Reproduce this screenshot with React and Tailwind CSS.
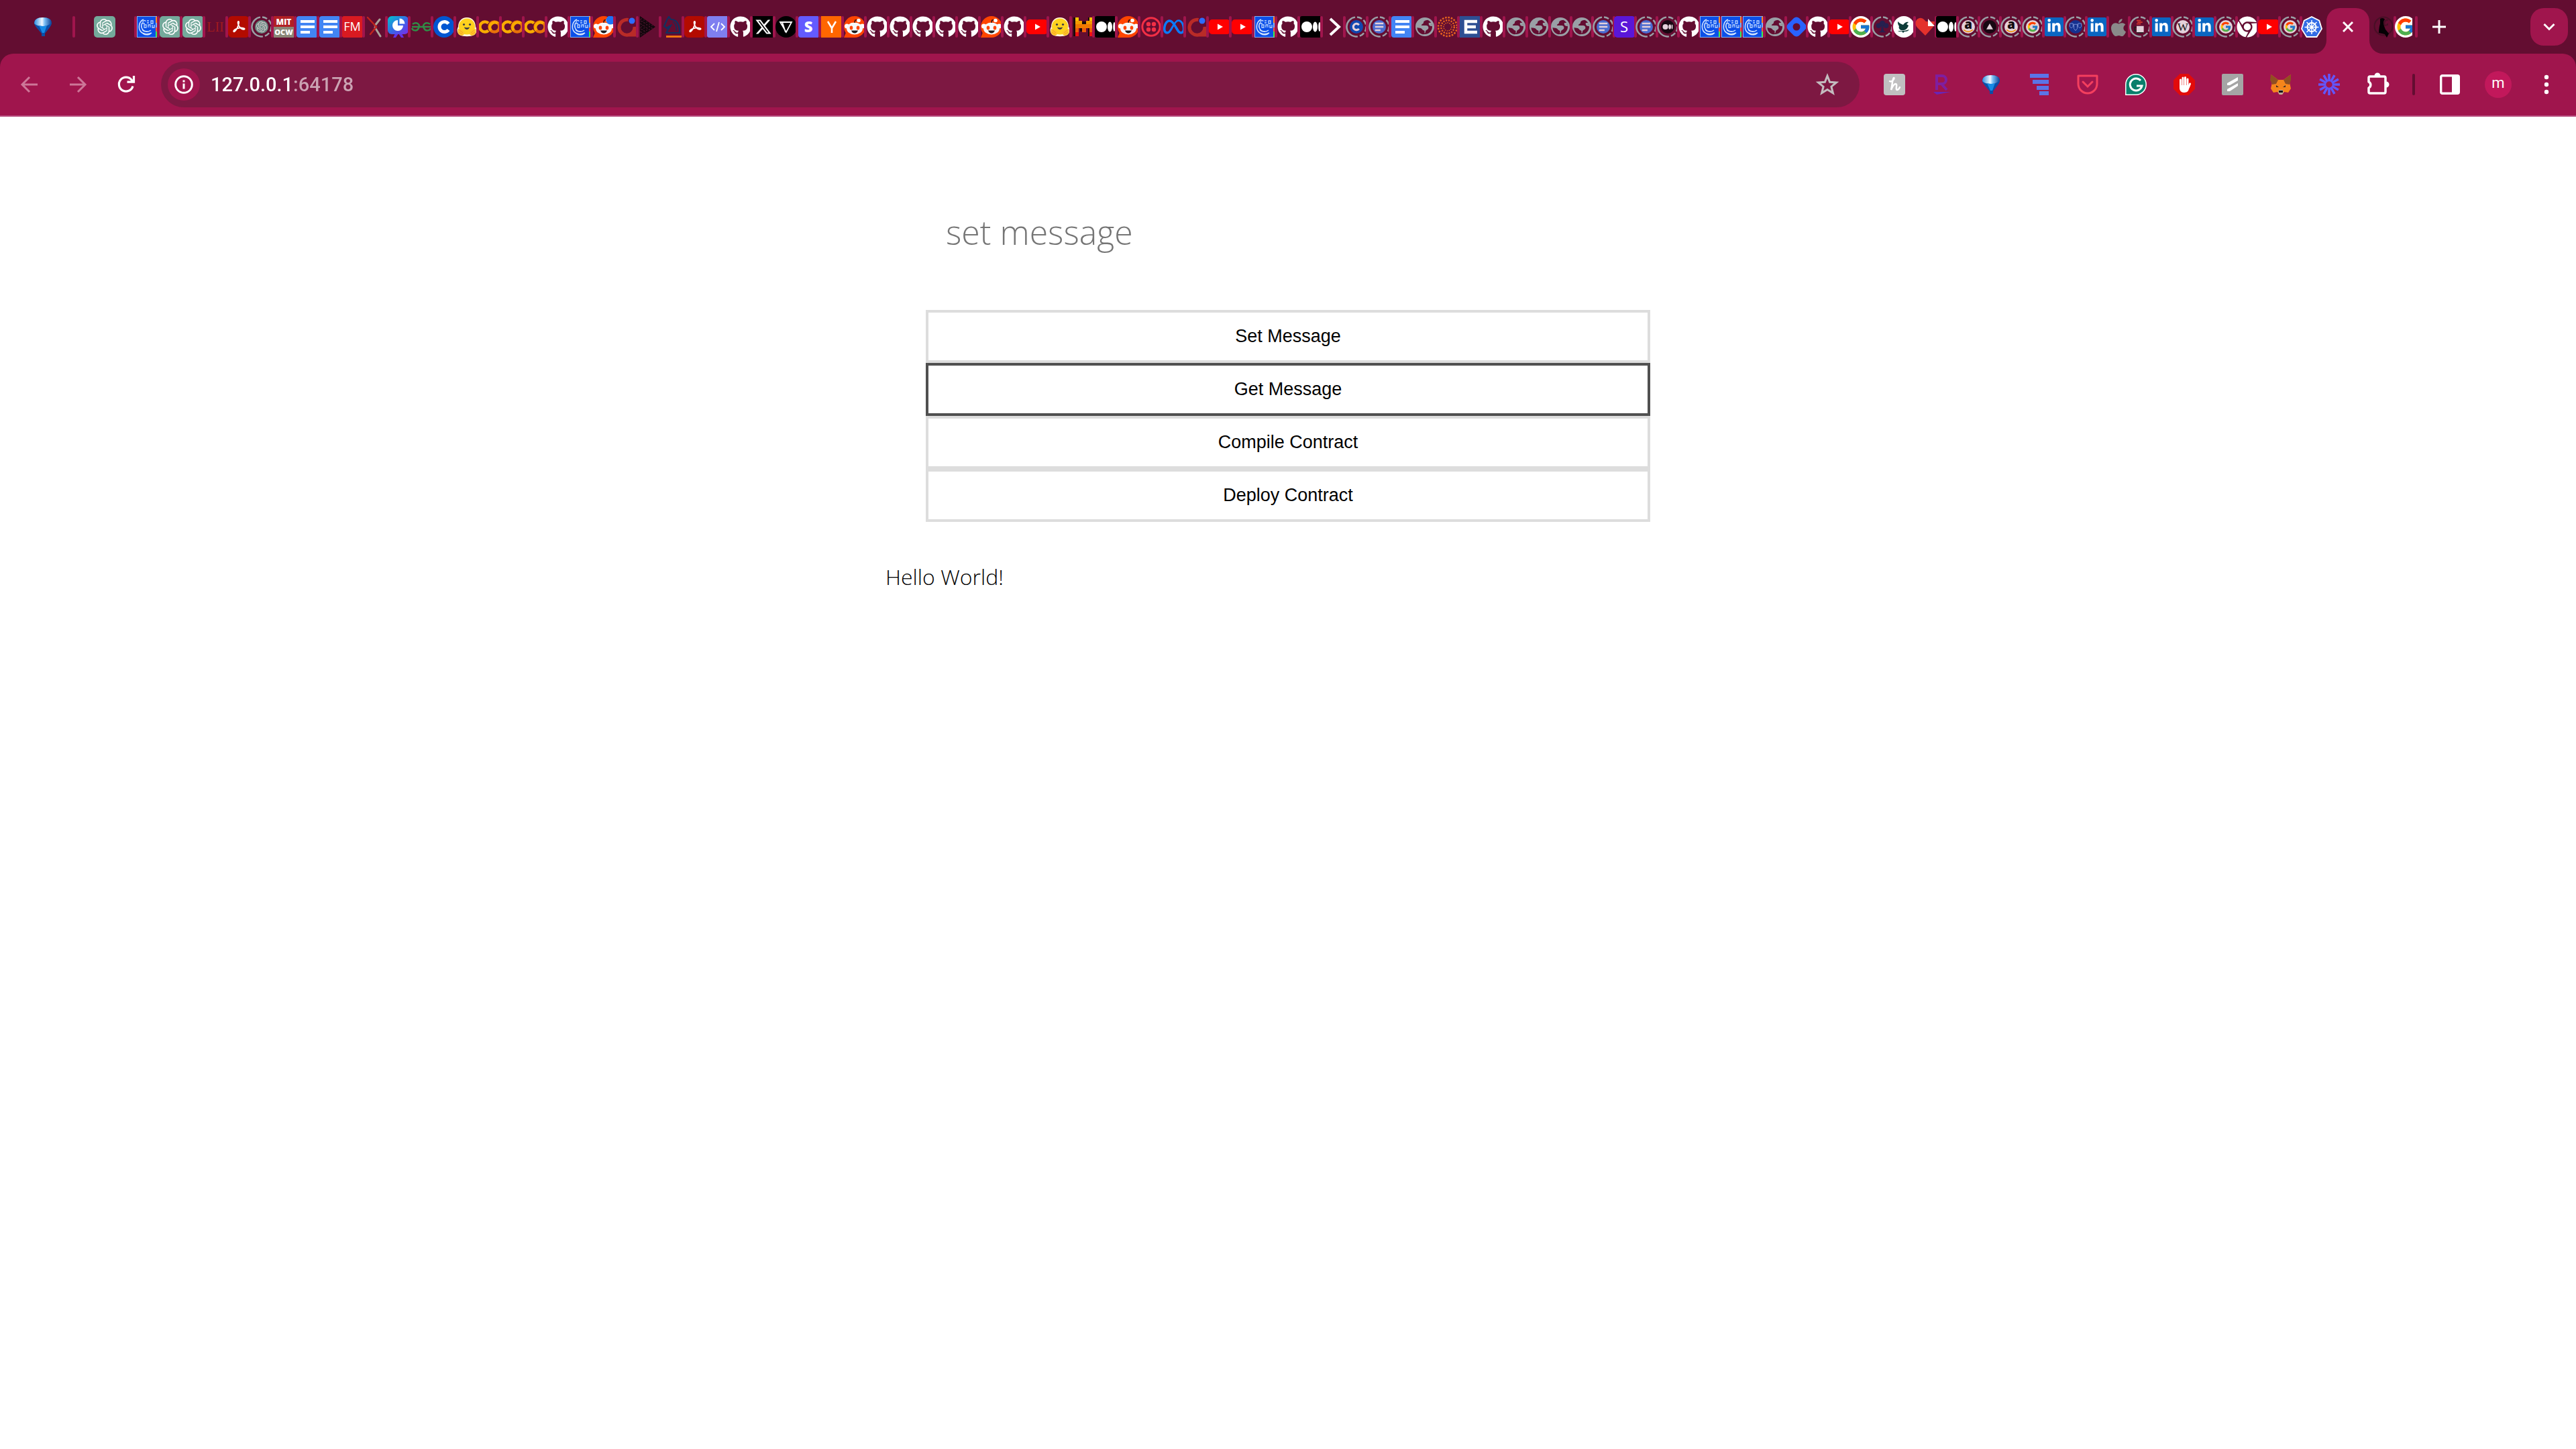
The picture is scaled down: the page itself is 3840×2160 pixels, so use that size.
import React from "react";
import { FaGithub, FaApple, FaChrome, FaHandPaper, FaLinkedinIn } from "react-icons/fa";
import { FaMeta, FaXTwitter } from "react-icons/fa6";
import { FcGoogle } from "react-icons/fc";
import { SiOpenai } from "react-icons/si";

const Glyph = ({ children }) => (
  <svg viewBox="0 0 32 32" className="block size-8 shrink-0 overflow-visible" aria-hidden="true">
    {children}
  </svg>
);

const Letter = ({ children, x = 15, y = 24, size = 22, fill = "#fff", weight = 400, family = "Open Sans, sans-serif" }) => (
  <text x={x} y={y} fontSize={size} fill={fill} fontWeight={weight} fontFamily={family} textAnchor="middle">
    {children}
  </text>
);

/* Favicons, each drawn on a 32 unit square */
const College = () => (
  <g>
    <rect width="32" height="32" fill="#0b4fe8" />
    <path d="M0 .5H32M.5 0V32M0 31.5H30" stroke="#7fb2f5" fill="none" />
    <path d="M29 1v9" stroke="#ff8a2b" strokeWidth="2" />
    <path d="M29 10v7" stroke="#7fb2f5" strokeWidth="2" />
    <path d="M29 17v6" stroke="#ff5a3c" strokeWidth="2" />
    <path d="M29 23v8" stroke="#3df04d" strokeWidth="2" />
    <path d="M10 5C3 8 2 17 5 22s11 6 17 3M8 10c-3 6 0 13 8 13M9 26c5 3 10 2 13-1M8 20c3 4 9 4 13 1" stroke="#d5e6ff" strokeWidth="1.500" fill="none" />
    <path d="M9 8c1-2 4-2 4 0M9 8v3h3M15 7h3m-3 3h3M21 7v4h3V7zM11 13v4h3v-4zM17 17v-4h3v4M23 13v4h3v-4" stroke="#b9d4ff" strokeWidth="1.300" fill="none" />
  </g>
);
const Gpt = () => (
  <g>
    <rect width="32" height="32" rx="5" fill="#74a99b" />
    <SiOpenai x="4" y="4" size={24} color="#fff" />
  </g>
);
const Lii = () => <Letter size={20} fill="#a01a1e" family="Liberation Serif, serif" y={23}>LII</Letter>;
const Acrobat = () => (
  <g>
    <rect width="32" height="32" rx="6" fill="#b30b00" />
    <path d="M15.500 8c-1.500 0-1 3.500.5 6.500 2 4 6 6.500 8.500 5 1-1.500-3.500-2.500-7.500-1.800-4 .7-9 2.800-8.800 5 .6 1.800 3.500-.8 5.500-5.200 1.700-3.800 3.500-9.500 1.800-9.500z" fill="none" stroke="#fff" strokeWidth="1.800" />
  </g>
);
const Mit = () => (
  <g>
    <rect width="32" height="16" fill="#b11f24" />
    <rect y="16" width="32" height="16" fill="#8b8778" />
    <Letter size={12} weight={800} y={13}>MIT</Letter>
    <Letter size={11} weight={800} y={28}>OCW</Letter>
  </g>
);
const Docs = () => (
  <g>
    <rect width="32" height="32" rx="4" fill="#4285f4" />
    <path d="M6 8h21M6 16h21M6 24h14" stroke="#fff" strokeWidth="4" />
  </g>
);
const Fm = () => (
  <g>
    <rect width="32" height="32" rx="3" fill="#d91a21" />
    <Letter size={18} weight={400} y={22}>FM</Letter>
  </g>
);
const Arxiv = () => (
  <g strokeLinecap="round" fill="none">
    <path d="M22 5 15 14M15 17l8 13" stroke="#aaa499" strokeWidth="3" />
    <path d="M4 2l13 14L8 27" stroke="#c0241e" strokeWidth="2.500" />
  </g>
);
const Slides = () => (
  <g>
    <defs>
      <linearGradient id="slides" x1="0" y1="0" x2="1" y2="1">
        <stop offset="0" stopColor="#00c4cc" />
        <stop offset=".55" stopColor="#3a63e8" />
        <stop offset="1" stopColor="#7d2ae8" />
      </linearGradient>
    </defs>
    <path d="M12 24l-4 8h4l4-6 4 6h4l-4-8z" fill="#6431e8" />
    <rect width="31" height="27" rx="6" fill="url(#slides)" />
    <path d="M15 6v8h8a8 8 0 1 1-8-8z" fill="#fff" />
    <path d="M17.500 3.500v8h8a8 8 0 0 0-8-8z" fill="#fff" />
  </g>
);
const Geeks = () => (
  <path d="M2 16h28M3 12c6-4 12 0 9 6-2 5-9 4-10 0M29 12c-6-4-12 0-9 6 2 5 9 4 10 0" fill="none" stroke="#2f8d46" strokeWidth="2.500" />
);
const Coursera = () => (
  <g>
    <circle cx="16" cy="16" r="16" fill="#0056d2" />
    <path d="M22.500 11.500a7.500 7.500 0 1 0 0 9" fill="none" stroke="#fff" strokeWidth="5" />
  </g>
);
const Hugging = () => (
  <g>
    <path d="M16 2C8 2 3 8 3 16c-3 5-1 10 2 12 5 3 17 3 22 0 3-2 5-7 2-12C29 8 24 2 16 2z" fill="#fff6df" />
    <circle cx="16" cy="15.500" r="12" fill="#ffd21e" />
    <circle cx="11.500" cy="12.500" r="1.600" fill="#3a3b45" />
    <circle cx="20.500" cy="12.500" r="1.600" fill="#3a3b45" />
    <path d="M12 16.500c1 4.500 7 4.500 8 0q-4 1.500-8 0z" fill="#3a3b45" />
    <path d="M3 19c3 0 6 2 9 4 1 3-1 6-3 6-5 0-8-4-6-10zM29 19c-3 0-6 2-9 4-1 3 1 6 3 6 5 0 8-4 6-10z" fill="#ffc52a" />
    <path d="M5 21l5 4M4 24l5 3M27 21l-5 4M28 24l-5 3" stroke="#f5a21c" strokeWidth="1" />
  </g>
);
const Colab = () => (
  <g fill="none" strokeWidth="4.500">
    <path d="M14 10.500a7.500 7.500 0 1 0 0 11" stroke="#f9ab00" />
    <circle cx="23" cy="16" r="7.500" stroke="#e8710a" />
    <path d="M17.700 21.300A7.500 7.500 0 0 1 28 10.700" stroke="#f9ab00" />
  </g>
);
const Github = () => <FaGithub size={32} color="#fff" />;
const Reddit = () => (
  <g>
    <circle cx="16" cy="16" r="16" fill="#ff4500" />
    <path d="M0 32h16V20H5z" fill="#ff4500" />
    <circle cx="4.500" cy="15" r="3.500" fill="#fff" />
    <circle cx="27.500" cy="15" r="3.500" fill="#fff" />
    <ellipse cx="16" cy="18.500" rx="12" ry="9" fill="#f5f8fa" />
    <path d="M16 10c0-4 1-5 4-4" stroke="#2a1512" strokeWidth="1.500" fill="none" />
    <circle cx="22" cy="6.500" r="2.800" fill="#fff" />
    <ellipse cx="11" cy="17.500" rx="2.300" ry="3" fill="#ff4500" />
    <ellipse cx="21" cy="17.500" rx="2.300" ry="3" fill="#ff4500" />
    <path d="M11 21.500h10q-1.500 4-5 4t-5-4z" fill="#1c1c1c" />
  </g>
);
const RedditNew = () => (
  <g>
    <Reddit />
    <circle cx="26" cy="6" r="6.500" fill="#1a73f8" />
  </g>
);
const RingDot = () => (
  <g>
    <path d="M19 5.500A11.500 11.500 0 1 0 28 16v12h-8" fill="none" stroke="#b92b27" strokeWidth="5" />
    <circle cx="24" cy="7" r="6" fill="#630d31" />
    <circle cx="24" cy="7" r="4.500" fill="#2d6cff" />
  </g>
);
const Cubes = () => (
  <g>
    <path d="M2 0 25 16 2 32z" fill="#12060c" />
    <path d="M4 3v26M8 5v22M12 8v16M16 11v10M20 13v6M2 5l18 13M2 11l14 10M2 17l10 8M2 23l6 5" stroke="#4f1730" strokeDasharray="2 2" />
  </g>
);
const Knight = () => (
  <g>
    <path d="M8 25c0-5 4-7 6-11-3 1-4 2-6 4l-4-3 4-9 3-5 3 4c8 0 13 6 13 20H6" fill="none" stroke="#12305f" strokeWidth="2.200" />
    <path d="M17 8c4 3 6 8 5 14" fill="none" stroke="#12305f" strokeWidth="1.500" />
    <path d="M7 30.500h23" stroke="#f0750f" strokeWidth="3" />
  </g>
);
const Code = () => (
  <g>
    <rect width="32" height="32" rx="3" fill="#7f7ff0" />
    <path d="M11 11l-5 5 5 5M21 11l5 5-5 5M18 9l-4 14" fill="none" stroke="#fff" strokeWidth="1.800" />
  </g>
);
const Twitter = () => (
  <g>
    <rect width="32" height="32" fill="#000" />
    <FaXTwitter x="3" y="3" size={26} color="#fff" />
  </g>
);
const Prism = () => (
  <g>
    <circle cx="16" cy="16" r="16" fill="#000" />
    <path d="M7 9h17l-8 15zM10 9l5 15" fill="none" stroke="#fff" strokeWidth="1.800" />
  </g>
);
const StripeS = () => (
  <g>
    <rect width="32" height="32" rx="4" fill="#635bff" />
    <Letter weight={800} size={22}>S</Letter>
  </g>
);
const Combinator = () => (
  <g>
    <rect width="32" height="32" fill="#ff6600" />
    <path d="M10 8l6 10 6-10M16 17v8" stroke="#fff" strokeWidth="2.500" fill="none" />
  </g>
);
const Youtube = () => (
  <g>
    <rect y="5" width="32" height="22" rx="5" fill="#f00" />
    <path d="M13 11.500v9l8-4.500z" fill="#fff" />
  </g>
);
const Mistral = () => (
  <g>
    <path d="M2 2h7v28H2zM12 8h9v15h-9zM24 2h7v28h-7z" fill="#1a0a0a" />
    <path d="M5 2h5v6H5zM26 2h5v6h-5z" fill="#f7c500" />
    <path d="M5 7h10v6H5zM21 7h10v6H21z" fill="#f59a00" />
    <path d="M5 12h26v6H5z" fill="#f07a00" />
    <path d="M5 18h5v6H5zM15 18h6v6h-6zM26 18h5v6h-5z" fill="#ee5a0a" />
    <path d="M5 24h5v6H5zM26 24h5v6h-5z" fill="#f01010" />
  </g>
);
const Medium = () => (
  <g>
    <rect width="32" height="32" rx="3" fill="#000" />
    <circle cx="10" cy="16" r="8" fill="#fff" />
    <ellipse cx="22.500" cy="16" rx="3.500" ry="7.500" fill="#fff" />
    <ellipse cx="29" cy="16" rx="1.800" ry="7" fill="#fff" />
  </g>
);
const Twilio = () => (
  <g fill="#f22f46">
    <circle cx="16" cy="16" r="13.200" fill="none" stroke="#f22f46" strokeWidth="3" />
    <circle cx="12" cy="12" r="3.200" />
    <circle cx="20" cy="12" r="3.200" />
    <circle cx="12" cy="20" r="3.200" />
    <circle cx="20" cy="20" r="3.200" />
  </g>
);
const Meta = () => <FaMeta size={32} color="#0a7cff" />;
const Prompt = () => <path d="M11 4l13 12-13 12" fill="none" stroke="#fff" strokeWidth="4" />;
const Globe = () => (
  <g>
    <circle cx="16" cy="16" r="12.500" fill="none" stroke="#9aa0a6" strokeWidth="3" />
    <path d="M3 16C3 8 9 3 16 3c3 0 4 1 4 3-3 0-6 1-6 4 0 2-3 1-3 4h7c3 0 4 3 3 5-2 2-4 2-4 4s-1 3-3 3v3C8 29 3 23 3 16z" fill="#9aa0a6" />
    <path d="M4.500 17c2 1 5 0 7 2 1 2 3 2 4 3v5c-6 1-11-4-11-10z" fill="#630d31" />
    <path d="M22 10c-1 3 1 5 5 5l-1-5z" fill="#9aa0a6" />
  </g>
);
const Orbit = () => (
  <g fill="none" stroke="#e8641e">
    <circle cx="16" cy="16" r="14" strokeWidth="2.600" strokeDasharray="2.600 1.800" />
    <circle cx="16" cy="16" r="9.800" strokeWidth="2.400" strokeDasharray="2.200 1.700" />
    <circle cx="16" cy="16" r="6" strokeWidth="1.500" strokeDasharray="1.500 1.500" />
  </g>
);
const BlockE = () => (
  <g>
    <rect width="32" height="32" fill="#2d4f93" />
    <path d="M26 8H9v16h17M9 16h15" stroke="#fff" strokeWidth="4.500" fill="none" />
  </g>
);
const PurpleS = () => (
  <g>
    <rect width="32" height="32" rx="5" fill="#5a17d8" />
    <Letter size={22}>S</Letter>
  </g>
);
const Diamond = () => (
  <g>
    <rect x="4" y="4" width="24" height="24" rx="6" fill="#2962ff" transform="rotate(45 16 16)" />
    <circle cx="16" cy="16" r="5.500" fill="#630d31" />
  </g>
);
const Google = () => (
  <g>
    <circle cx="16" cy="16" r="16" fill="#fff" />
    <FcGoogle x="1" y="1" size={30} />
  </g>
);
const Bird = () => (
  <g>
    <circle cx="16" cy="16" r="16" fill="#fff" />
    <path d="M7 8c2 2 5 4 8 5 2-3 5-5 8-4l-3 3 3 2c-2 6-6 8-11 7-3-1-4-4-3-6-2-2-2-5-2-7zM7 22c5 0 9 1 17-2-2 3-5 3-7 3l-2 2-2-2c-3 0-5 0-6-1z" fill="#0d3b38" />
  </g>
);
const Heart = () => (
  <g>
    <path d="M16 29 4 17C-3 9 6-2 14 5l3 3h13c0 5-2 8-4 10z" fill="#e4312c" />
    <path d="M20 4l10 11H20z" fill="#fff" />
  </g>
);
const Amazon = () => (
  <g>
    <circle cx="16" cy="16" r="16" fill="#e3d0da" />
    <Letter x={16} size={30} y={20} weight={800} fill="#120a0e">a</Letter>
    <path d="M5 23c7 6 15 6 22 0" fill="none" stroke="#f29100" strokeWidth="2.500" />
  </g>
);
const Vercel = () => (
  <g>
    <circle cx="16" cy="16" r="16" fill="#180812" />
    <path d="M16 8l8 14H8z" fill="#e3d0da" />
  </g>
);
const PaleGoogle = () => (
  <g>
    <circle cx="16" cy="16" r="16" fill="#e3d0da" />
    <FcGoogle x="2" y="2" size={28} />
  </g>
);
const Linkedin = () => (
  <g>
    <rect x="2" y="2" width="28" height="28" rx="2" fill="#0a66c2" />
    <FaLinkedinIn x="5" y="4" size={22} color="#fff" />
  </g>
);
const Tree = () => (
  <g fill="#26204f">
    <circle cx="16" cy="8" r="7" />
    <circle cx="7" cy="13" r="6" />
    <circle cx="25" cy="13" r="6" />
    <path d="M14 12h4l1 13 6 4H7l6-4z" />
  </g>
);
const Shields = () => (
  <g>
    <circle cx="16" cy="16" r="16" fill="#15318f" />
    <path d="M2 8h8v7l-4 4-4-4zM12 10h8v10l-4 5-4-5zM22 8h8v7l-4 4-4-4z" fill="none" stroke="#7f93d8" strokeWidth="1.500" />
  </g>
);
const Apple = () => <FaApple x="1" y="2" size={30} color="#8a8a8a" />;
const Mug = () => (
  <g>
    <path d="M8 1h10M10 5h12M8 9h10" stroke="#d5372f" strokeWidth="2.500" />
    <path d="M8 14h17v15H8z" fill="#e3d0da" />
    <path d="M8 17H3v8h5M8 30h16" fill="none" stroke="#222" strokeWidth="2.500" />
  </g>
);
const Wiki = () => (
  <g>
    <circle cx="16" cy="16" r="16" fill="#e3d0da" />
    <Letter x={16} size={27} y={25} fill="#111" family="Liberation Serif, serif">W</Letter>
  </g>
);
const Chrome = () => <FaChrome size={32} color="#fff" />;
const Kube = () => (
  <g>
    <path d="M16 0l12 6 4 13-8 13H8L0 19 4 6z" fill="#fff" />
    <path d="M16 2l10.500 5.200L30 19l-7 11H9L2 19 5.500 7.200z" fill="#326ce5" />
    <g stroke="#fff" fill="none">
      <circle cx="16" cy="16.500" r="6.500" strokeWidth="2" />
      <path d="M16 6v21M5.500 16.500h21M8.500 9l15 15M23.500 9l-15 15" strokeWidth="1.500" />
    </g>
    <circle cx="16" cy="16.500" r="2" fill="#fff" />
  </g>
);
const DarkBird = () => (
  <g>
    <circle cx="15" cy="15" r="13.500" fill="none" stroke="#471026" strokeWidth="2" />
    <path d="M22 6c-4-1-7 3-5 8l4-1v-2" fill="none" stroke="#471026" strokeWidth="2" />
    <path d="M10 4c3-2 6-1 7 1-3 3-2 7-1 10l2 5 5 6-3 6-3-5-9-2c0-6 1-10 2-14z" fill="#050104" />
  </g>
);
const Balloon = () => (
  <g>
    <defs>
      <linearGradient id="balloon" x1="0" x2="1">
        <stop offset="0" stopColor="#2d8fe0" />
        <stop offset=".45" stopColor="#f2f8ff" />
        <stop offset=".6" stopColor="#7cc0f5" />
        <stop offset="1" stopColor="#0a3f93" />
      </linearGradient>
    </defs>
    <path d="M3 11C3 5 8 2 16 2s13 3 13 9c0 3-7 11-10 15v4h-5v-4C11 22 3 14 3 11z" fill="#0b4ea8" />
    <path d="M3 11C3 5 8 2 16 2s13 3 13 8c-5 4-8 5-13 5S6 14 3 11z" fill="url(#balloon)" />
    <path d="M10 14l5 11h3l4-11q-6 2-12 0z" fill="#168ae6" />
  </g>
);

/* Sleeping tabs show their favicon small, inside a broken grey ring */
const asleep = (Icon) => () => (
  <g>
    <circle cx="16" cy="16" r="14.500" fill="none" stroke="#9aa0a6" strokeWidth="2.500" pathLength="360" strokeDasharray="30 12 30 12 30 12 30 12 180 12" transform="rotate(-86 16 16)" />
    <g transform="translate(6 6) scale(.625)">
      <Icon />
    </g>
  </g>
);
const PaleMedium = () => (
  <g>
    <circle cx="16" cy="16" r="16" fill="#180812" />
    <circle cx="10.500" cy="16" r="6.500" fill="#e3d0da" />
    <ellipse cx="21" cy="16" rx="3" ry="6" fill="#e3d0da" />
    <ellipse cx="26.500" cy="16" rx="1.500" ry="5.500" fill="#e3d0da" />
  </g>
);
const RoundDocs = () => (
  <g>
    <circle cx="16" cy="16" r="16" fill="#4a6bd0" />
    <path d="M6 8h20M6 16h20M6 24h13" stroke="#e3d0da" strokeWidth="4" />
  </g>
);
const RoundGpt = () => (
  <g>
    <circle cx="16" cy="16" r="16" fill="#6b8d85" />
    <SiOpenai x="3" y="3" size={26} color="#cfc3c9" />
  </g>
);
const RoundCoursera = () => (
  <g>
    <circle cx="16" cy="16" r="16" fill="#1047b0" />
    <path d="M22 11.500a7.500 7.500 0 1 0 0 9" fill="none" stroke="#e3d0da" strokeWidth="5" />
  </g>
);
const SleepGpt = asleep(RoundGpt);
const SleepCoursera = asleep(RoundCoursera);
const SleepDocs = asleep(RoundDocs);
const SleepMedium = asleep(PaleMedium);
const SleepTree = asleep(Tree);
const SleepAmazon = asleep(Amazon);
const SleepVercel = asleep(Vercel);
const SleepGoogle = asleep(PaleGoogle);
const SleepShields = asleep(Shields);
const SleepMug = asleep(Mug);
const SleepWiki = asleep(Wiki);

const wideTabs = [
  College, Gpt, Gpt, Lii, Acrobat, SleepGpt, Mit, Docs, Docs, Fm, Arxiv, Slides, Geeks,
  Coursera, Hugging, Colab, Colab, Colab, Github, College, RedditNew, RingDot, Cubes, Knight,
  Acrobat, Code, Github, Twitter, Prism, StripeS, Combinator, Reddit, Github, Github, Github,
  Github, Github, Reddit, Github, Youtube, Hugging, Mistral, Medium, Reddit, Twilio, Meta,
  RingDot, Youtube, Youtube, College, Github, Medium, Prompt, SleepCoursera, SleepDocs, Docs,
  Globe, Orbit, BlockE, Github, Globe, Globe,
];
const narrowTabs = [
  Globe, Globe, SleepDocs, PurpleS, SleepDocs, SleepMedium, Github, College, College, College,
  Globe, Diamond, Github, Youtube, Google, SleepTree, Bird, Heart, Medium, SleepAmazon,
  SleepVercel, SleepAmazon, SleepGoogle, Linkedin, SleepShields, Linkedin, Apple, SleepMug,
  Linkedin, SleepWiki, Linkedin, SleepGoogle, Chrome, Youtube, SleepGoogle,
];

const Divider = () => <span className="h-8 w-1 shrink-0 rounded-full bg-[#a0154d]" />;

function Tab({ icon: Icon, narrow, width = "w-[30px]", label }) {
  return (
    <button type="button" role="tab" aria-selected="false" aria-label={label} className="flex shrink-0 items-center">
      <Divider />
      <span className={`relative overflow-hidden ${narrow ? "-ml-0.5" : ""} ${width}`}>
        <Glyph><Icon /></Glyph>
      </span>
    </button>
  );
}

function TabStrip() {
  return (
    <div role="tablist" aria-label="Open tabs" className="flex h-20 items-center bg-[#630d31] pl-12">
      <div className="mr-7 flex items-center gap-7">
        <button type="button" role="tab" aria-selected="false" aria-label="Pinned balloon"><Glyph><Balloon /></Glyph></button>
        <Divider />
        <button type="button" role="tab" aria-selected="false" aria-label="Pinned chat"><Glyph><Gpt /></Glyph></button>
      </div>
      {wideTabs.map((icon, i) => <Tab key={i} icon={icon} label={`Tab ${i + 1}`} />)}
      {narrowTabs.map((icon, i) => <Tab key={i} icon={icon} narrow label={`Tab ${wideTabs.length + i + 1}`} />)}
      <Tab icon={Kube} narrow width="w-8" label="Cluster" />
      <div role="tab" aria-selected="true" className="relative ml-1.5 flex h-[68px] w-16 shrink-0 items-center justify-center self-end rounded-t-[20px] bg-[#a0154d] pb-3">
        <svg viewBox="0 0 20 20" className="absolute bottom-0 -left-5 size-5" aria-hidden="true"><path d="M20 0v20H0A20 20 0 0 0 20 0z" fill="#a0154d" /></svg>
        <svg viewBox="0 0 20 20" className="absolute -right-5 bottom-0 size-5" aria-hidden="true"><path d="M0 0v20h20A20 20 0 0 1 0 0z" fill="#a0154d" /></svg>
        <button type="button" aria-label="Close tab">
          <svg viewBox="0 0 16 16" className="size-4" aria-hidden="true"><path d="M1 1l14 14M15 1 1 15" stroke="#fff" strokeWidth="3" /></svg>
        </button>
      </div>
      <button type="button" role="tab" aria-selected="false" aria-label="Bird" className="ml-1.5 w-[30px] shrink-0 overflow-hidden"><Glyph><DarkBird /></Glyph></button>
      <Tab icon={Google} narrow width="mr-1 w-[26px]" label="Search" />
      <Divider />
      <button type="button" aria-label="New tab" className="ml-[22px] shrink-0">
        <svg viewBox="0 0 20 20" className="size-5" aria-hidden="true"><path d="M10 0v20M0 10h20" stroke="#fff" strokeWidth="3" /></svg>
      </button>
      <button type="button" aria-label="Search tabs" className="mr-3 ml-auto flex size-14 shrink-0 items-center justify-center rounded-[20px] bg-[#a0154d]">
        <svg viewBox="0 0 18 12" className="h-3 w-[18px]" aria-hidden="true"><path d="M1.500 2 9 9.500 16.500 2" fill="none" stroke="#fff" strokeWidth="3" /></svg>
      </button>
    </div>
  );
}

function ToolButton({ label, children }) {
  return (
    <button type="button" aria-label={label} className="flex size-14 shrink-0 items-center justify-center">
      <Glyph>{children}</Glyph>
    </button>
  );
}

const extensions = [
  ["Honey", <g><rect width="32" height="32" rx="4" fill="#c0bfc0" /><path d="M9 11c4 2 8-5 6-5s-2 11-4 18c2-5 4-9 7-9 3 0-1 9 2 9 2 0 3-2 4-4" fill="none" stroke="#fff" strokeWidth="2.500" strokeLinecap="round" /></g>],
  ["Rakuten", <g><path d="M7 24V3h8a6 6 0 0 1 0 12H8M14 15l8 9" fill="none" stroke="#7f1fa0" strokeWidth="4" /><path d="M2 27h26l-21 4z" fill="#6a25b5" /></g>],
  ["Balloon", <Balloon />],
  ["Lists", <path d="M2 0h28v6H2zM6 9h24v6H6zM12 18h18v6H12zM16 26h14v6H16z" fill="#5b74e8" />],
  ["Pocket", <g fill="none" stroke="#f43f5e" strokeWidth="3"><path d="M2 3h28v12a14 14 0 0 1-28 0z" strokeLinejoin="round" /><path d="M9 12l7 7 7-7" strokeLinecap="round" /></g>],
  ["Grammar", <g><path d="M.8 31.200V16A15.200 15.200 0 1 1 16 31.200z" fill="#0a7f6c" stroke="#fff" strokeWidth="1.500" /><path d="M23 10a9 9 0 1 0 2 8h-8" fill="none" stroke="#fff" strokeWidth="3" /></g>],
  ["Blocker", <g><path d="M9.500 0h13L32 9.500v13L22.500 32h-13L0 22.500v-13z" fill="#e20b0b" /><g fill="none" stroke="#fff" strokeLinecap="round" strokeWidth="3"><path d="M10.500 9v10M14 6v12M17.500 5.500V18M21 8v11" /><path d="M24.500 15l-2 5" /></g><path d="M9 17h13l3.500-2-3 9c-1 3-4 4-7 4-4 0-6.500-3-6.500-7z" fill="#fff" /></g>],
  ["Scribe", <g><rect width="32" height="32" rx="2" fill="#a5a5a5" /><path d="M8 14 24 5v5L12 17H8zM8 23l16-9v4L12 26H8z" fill="#fff" /></g>],
  ["Wallet", <g><path d="M1 1l11 8h8L31 1l-2 12 2 9-4 6-6-1-3 4h-4l-3-4-6 1-4-6 2-9z" fill="#f6851b" /><path d="M1 1l11 8-3 6-6 1L0 9zM31 1 20 9l3 6 6 1 2-7z" fill="#8f4f22" /><path d="M13 24h6l1 4-2 3h-4l-2-3z" fill="#c0ad9e" /><path d="M13 25h6v3h-6z" fill="#161616" /><path d="M9 17l4 3H9zM23 17l-4 3h4z" fill="#3a2c28" /></g>],
  ["Burst", <g stroke="#6257ff" strokeWidth="3.500">{[0, 30, 60, 90, 120, 150, 180, 210, 240, 270, 300, 330].map((a) => <path key={a} d="M16 0v10" transform={`rotate(${a} 16 16)`} />)}<circle cx="16" cy="16" r="5.500" strokeWidth="1.500" fill="none" /></g>],
  ["Extensions", <g><path d="M5 4h21a2 2 0 0 1 2 2v21a2 2 0 0 1-2 2H5a2 2 0 0 1-2-2v-6a5 5 0 0 0 0-9V6a2 2 0 0 1 2-2z" fill="none" stroke="#fff" strokeWidth="3.500" strokeLinejoin="round" /><path d="M11.500 3a4.500 4.500 0 0 1 9 0zM29 11.500a4.500 4.500 0 0 1 0 9z" fill="#fff" /></g>],
];

function Toolbar() {
  return (
    <div className="bg-[#630d31]">
      <div className="flex h-[94px] items-center gap-4 rounded-t-[20px] border-b-2 border-[#b75080] bg-[#a0154d] px-4">
        <ToolButton label="Back"><path d="M16 5 5 16l11 11M5 16h23" fill="none" stroke="#cd7798" strokeWidth="3" /></ToolButton>
        <ToolButton label="Forward"><path d="M16 5l11 11-11 11M27 16H4" fill="none" stroke="#cd7798" strokeWidth="3" /></ToolButton>
        <ToolButton label="Reload"><path d="M26 18.500A10.500 10.500 0 1 1 24 9l2 3M17.500 12.200H27.500V3" fill="none" stroke="#fff" strokeWidth="3.200" /></ToolButton>
        <div className="mx-2 flex h-[68px] min-w-0 flex-1 items-center rounded-full bg-[#7d1842] pr-5 pl-2.5">
          <button type="button" aria-label="Site information" className="flex size-12 shrink-0 items-center justify-center rounded-full bg-[#a0154d]">
            <svg viewBox="0 0 28 28" className="size-7" aria-hidden="true">
              <circle cx="14" cy="14" r="12.300" fill="none" stroke="#fff" strokeWidth="3" />
              <path d="M14 12.500v8M14 7.500v3" stroke="#fff" strokeWidth="3" />
            </svg>
          </button>
          <input
            type="text"
            aria-label="Address"
            defaultValue="127.0.0.1:64178"
            className="ml-4 min-w-0 flex-1 bg-[linear-gradient(90deg,#ffffff_119px,#cba3b3_119px)] bg-clip-text font-['Roboto',sans-serif] text-[29px] leading-10 font-medium text-transparent outline-none"
          />
          <ToolButton label="Bookmark"><path d="M16 3l3.600 9.200 9.900.7-7.600 6.300 2.500 9.600-8.400-5.300-8.400 5.300 2.500-9.600L2.500 12.900l9.900-.7z" fill="none" stroke="#c3bcbf" strokeWidth="3" /></ToolButton>
        </div>
        {extensions.map(([label, art]) => <ToolButton key={label} label={label}>{art}</ToolButton>)}
        <span className="mx-2 h-8 w-1 shrink-0 rounded-full bg-[#630d31]" />
        <ToolButton label="Side panel"><rect x="2.700" y="2.700" width="26.600" height="26.600" rx="2" fill="none" stroke="#fff" strokeWidth="3.400" /><path d="M19 2h9v28h-9z" fill="#fff" /></ToolButton>
        <button type="button" aria-label="Profile m" className="flex size-14 shrink-0 items-center justify-center">
          <span className="flex size-10 items-center justify-center rounded-full bg-[#c2185b] pb-1 font-['Roboto',sans-serif] text-[22px] leading-6 text-white">m</span>
        </button>
        <ToolButton label="Menu"><g fill="#fff"><circle cx="16" cy="5" r="3.200" /><circle cx="16" cy="16" r="3.200" /><circle cx="16" cy="27" r="3.200" /></g></ToolButton>
      </div>
    </div>
  );
}

const actions = ["Set Message", "Get Message", "Compile Contract", "Deploy Contract"];

export default function App() {
  return (
    <div className="min-h-screen bg-white">
      <header>
        <TabStrip />
        <Toolbar />
      </header>
      <main className="mx-auto max-w-[1200px] pt-[120px] font-['Open_Sans',sans-serif] font-light text-black">
        <form className="mx-[60px] flex flex-col" onSubmit={(e) => e.preventDefault()}>
          <input
            type="text"
            aria-label="Message"
            placeholder="set message"
            className="mb-[60px] h-[108px] px-7.5 pb-1 text-[50px] placeholder:text-[#757575] outline-none"
          />
          {actions.map((label) => (
            <button
              key={label}
              type="button"
              className={`border-4 py-5 font-['Liberation_Sans',sans-serif] text-[27px] leading-[31px] font-normal ${label === "Get Message" ? "border-[#505050]" : "border-[#dddddd]"}`}
            >
              {label}
            </button>
          ))}
        </form>
        <p className="mt-[60px] text-[32px] leading-[44px]">Hello World!</p>
      </main>
    </div>
  );
}
